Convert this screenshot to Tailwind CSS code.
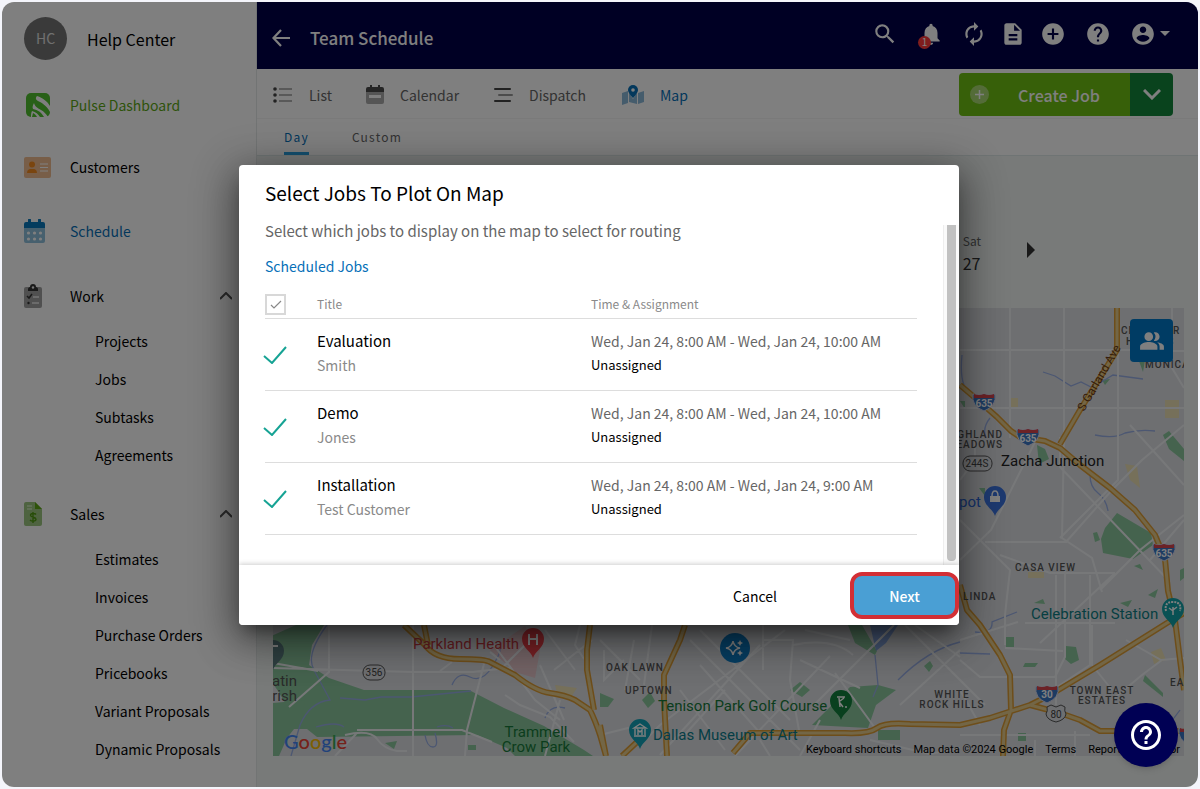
<!DOCTYPE html>
<html lang="en">
<head>
    <meta charset="UTF-8">
    <meta name="viewport" content="width=device-width, initial-scale=1.0">
    <title>Team Schedule</title>
    <script src="https://cdn.jsdelivr.net/npm/@tailwindcss/browser@4"></script>
</head>
<body class="bg-[#f4f5fb] p-0.5 font-['Noto_Sans_CJK_SC',sans-serif] text-[14px] leading-5 text-black">

    <div class="relative flex min-h-[calc(100vh-4px)] overflow-hidden rounded-xl bg-white">

        <!-- Sidebar -->
        <aside class="w-[255px] shrink-0 border-r border-[#e4e8e8] bg-white">
            <div class="flex h-[72px] items-center pl-[22px]">
                <span class="flex size-[43px] items-center justify-center rounded-full bg-[#757575] text-[#e0e0e0]">HC</span>
                <span class="ml-5 pt-0.5 text-[16px]">Help Center</span>
            </div>
            <nav>
                <a href="#" class="mt-[7px] flex h-12 items-center pl-[22px] text-[#5da714]">
                    <span class="w-[46px]">
                        <svg class="size-7" viewBox="0 0 28 28">
                            <rect x="2" y="2" width="24" height="24" rx="5" fill="#50c02e"/>
                            <path d="M13 5c6 2 10 5 13 10v6c-4-7-8-9-12-11-2-1-3-3-1-5zM10 12c1 4 4 5 7 7 3 1.500 5 4 7 7h-4c-3-5-6-7-11-8-1-2 0-4 1-6zM8 20c4 1 6 3 8 6H7c0-2 0-4 1-6z" fill="#fff"/>
                            <path d="M9 22l-1 4h5c-1-2-2-3-4-4z" fill="#50c02e"/>
                        </svg>
                    </span>
                    Pulse Dashboard
                </a>
                <a href="#" class="mt-[14px] flex h-12 items-center pl-[22px]">
                    <span class="w-[46px]">
                        <svg class="h-[21px] w-[27px]" viewBox="0 0 27 21">
                            <rect width="27" height="21" rx="2" fill="#f0bd90"/>
                            <circle cx="8" cy="7.500" r="3" fill="#f58a1e"/>
                            <path d="M3 16c0-3 2-4 3-4h4c1 0 3 1 3 4z" fill="#f58a1e"/>
                            <path d="M16 7h8M16 10.500h8M16 14h8" stroke="#fff" stroke-width="1.200"/>
                        </svg>
                    </span>
                    Customers
                </a>
                <a href="#" class="mt-4 flex h-12 items-center pl-[22px] text-[#0670b8]">
                    <span class="w-[46px]">
                        <svg class="h-6 w-[21px]" viewBox="0 0 21 24">
                            <path d="M0 8h21v14a2 2 0 0 1-2 2H2a2 2 0 0 1-2-2z" fill="#8fc0dc"/>
                            <path d="M2 3h2V1a1.200 1.200 0 0 1 3 0v2h7V1a1.200 1.200 0 0 1 3 0v2h2a2 2 0 0 1 2 2v4H0V5a2 2 0 0 1 2-2z" fill="#0878bc"/>
                            <g fill="#fff"><circle cx="4.500" cy="14" r="1.600"/><circle cx="10.500" cy="14" r="1.600"/><circle cx="16.500" cy="14" r="1.600"/><circle cx="4.500" cy="20" r="1.600"/><circle cx="10.500" cy="20" r="1.600"/><circle cx="16.500" cy="20" r="1.600"/></g>
                        </svg>
                    </span>
                    Schedule
                </a>
                <a href="#" class="mt-[17px] flex h-12 items-center pr-6 pl-[22px]">
                    <span class="w-[46px]">
                        <svg class="h-6 w-[18px]" viewBox="0 0 18 24">
                            <rect y="3" width="18" height="21" rx="2" fill="#a0a0a0"/>
                            <path d="M4 7V5c0-1 1-2 2-2a3 3 0 0 1 6 0c1 0 2 1 2 2v2z" fill="#333"/>
                            <circle cx="9" cy="3.500" r="1.200" fill="#eee"/>
                            <path d="M3 12l2 2 3-4" stroke="#333" stroke-width="1.500" fill="none"/>
                            <circle cx="4.500" cy="19" r="1.200" fill="#333"/>
                            <path d="M9 13h6M8 19h7" stroke="#e8e8e8" stroke-width="1.500"/>
                        </svg>
                    </span>
                    Work
                    <svg class="ml-auto h-2 w-3" viewBox="0 0 12 8" fill="none" stroke="#555" stroke-width="2"><path d="M0 7l6-6 6 6"/></svg>
                </a>
                <div class="flex flex-col pt-0.5 pl-[93px]">
                    <a href="#" class="flex h-[38px] items-center">Projects</a>
                    <a href="#" class="flex h-[38px] items-center">Jobs</a>
                    <a href="#" class="flex h-[38px] items-center">Subtasks</a>
                    <a href="#" class="flex h-[38px] items-center">Agreements</a>
                </div>
                <a href="#" class="mt-4 flex h-12 items-center pr-6 pl-[22px]">
                    <span class="w-[46px]">
                        <svg class="h-6 w-[18px]" viewBox="0 0 18 24">
                            <path d="M2 0h9l7 7v15a2 2 0 0 1-2 2H2a2 2 0 0 1-2-2V2a2 2 0 0 1 2-2z" fill="#9cc680"/>
                            <path d="M11 0l7 7h-7z" fill="#5da714"/>
                            <path d="M3 4h5M3 7h5" stroke="#e5f5d8" stroke-width="1.200"/>
                            <path d="M12 12.500c-1-1.500-5.500-1.500-5.500.8 0 2.500 5.500 1.500 5.500 4 0 2.300-4.500 2.300-6 .7M9 10v11" stroke="#4f9a10" stroke-width="1.400" fill="none"/>
                        </svg>
                    </span>
                    Sales
                    <svg class="ml-auto h-2 w-3" viewBox="0 0 12 8" fill="none" stroke="#555" stroke-width="2"><path d="M0 7l6-6 6 6"/></svg>
                </a>
                <div class="flex flex-col pt-0.5 pl-[93px]">
                    <a href="#" class="flex h-[38px] items-center">Estimates</a>
                    <a href="#" class="flex h-[38px] items-center">Invoices</a>
                    <a href="#" class="flex h-[38px] items-center">Purchase Orders</a>
                    <a href="#" class="flex h-[38px] items-center">Pricebooks</a>
                    <a href="#" class="flex h-[38px] items-center">Variant Proposals</a>
                    <a href="#" class="flex h-[38px] items-center">Dynamic Proposals</a>
                </div>
            </nav>
        </aside>

        <div class="flex min-w-0 flex-1 flex-col">
            <!-- Top bar -->
            <header class="flex h-[67px] items-center bg-[#000048] pr-7 pl-[15px] text-white">
                <button type="button" aria-label="Back" class="mt-1">
                    <svg class="size-[18px]" viewBox="0 0 18 18" fill="none" stroke="currentColor" stroke-width="2.200"><path d="M9 1L1.500 9 9 17M1.500 9H18"/></svg>
                </button>
                <h1 class="mt-1 ml-5 text-[17px] leading-6 font-medium">Team Schedule</h1>
                <div class="ml-auto flex items-center pb-1">
                    <button type="button" aria-label="Search" class="mr-5">
                        <svg class="size-[26px]" viewBox="0 0 24 24" fill="currentColor"><path d="M15.500 14h-.79l-.28-.27A6.471 6.471 0 0 0 16 9.500 6.500 6.500 0 1 0 9.500 16c1.610 0 3.090-.59 4.230-1.570l.27.28v.79l5 4.990L20.490 19l-4.990-5zm-6 0C7.010 14 5 11.990 5 9.500S7.010 5 9.500 5 14 7.010 14 9.500 11.990 14 9.500 14z"/></svg>
                    </button>
                    <button type="button" aria-label="Notifications" class="relative mr-[17px]">
                        <svg class="size-[26px]" viewBox="0 0 24 24" fill="currentColor"><path d="M12 22c1.100 0 2-.9 2-2h-4c0 1.100.89 2 2 2zm6-6v-5c0-3.070-1.640-5.640-4.500-6.320V4c0-.83-.67-1.500-1.500-1.500s-1.500.67-1.500 1.500v.68C7.630 5.360 6 7.920 6 11v5l-2 2v1h16v-1l-2-2z"/></svg>
                        <span class="absolute -bottom-0.5 left-0 flex size-[13px] items-center justify-center rounded-full bg-[#ff3b3b] text-[10px] leading-none">1</span>
                    </button>
                    <button type="button" aria-label="Sync" class="mr-[13px]">
                        <svg class="size-[26px]" viewBox="0 0 24 24" fill="currentColor"><path d="M12 6v3l4-4-4-4v3c-4.420 0-8 3.580-8 8 0 1.570.46 3.030 1.240 4.260L6.700 14.800A5.870 5.870 0 0 1 6 12c0-3.310 2.690-6 6-6zm6.760 1.740L17.300 9.200c.44.84.7 1.790.7 2.800 0 3.310-2.690 6-6 6v-3l-4 4 4 4v-3c4.420 0 8-3.580 8-8 0-1.570-.46-3.030-1.240-4.260z"/></svg>
                    </button>
                    <button type="button" aria-label="Documents" class="mr-[14px]">
                        <svg class="size-[26px]" viewBox="0 0 24 24" fill="currentColor"><path d="M14 2H6c-1.100 0-1.990.9-1.990 2L4 20c0 1.100.89 2 1.990 2H18c1.100 0 2-.9 2-2V8l-6-6zm2 16H8v-2h8v2zm0-4H8v-2h8v2zm-3-5V3.500L18.500 9H13z"/></svg>
                    </button>
                    <button type="button" aria-label="Add" class="mr-[19px]">
                        <svg class="size-[26px]" viewBox="0 0 24 24" fill="currentColor"><path d="M12 2C6.480 2 2 6.480 2 12s4.480 10 10 10 10-4.480 10-10S17.520 2 12 2zm5 11h-4v4h-2v-4H7v-2h4V7h2v4h4v2z"/></svg>
                    </button>
                    <button type="button" aria-label="Help" class="mr-[19px]">
                        <svg class="size-[26px]" viewBox="0 0 24 24" fill="currentColor"><path d="M12 2C6.480 2 2 6.480 2 12s4.480 10 10 10 10-4.480 10-10S17.520 2 12 2zm1 17h-2v-2h2v2zm2.070-7.750l-.9.92C13.450 12.900 13 13.500 13 15h-2v-.5c0-1.100.45-2.100 1.170-2.830l1.240-1.260c.37-.36.59-.86.59-1.410 0-1.100-.9-2-2-2s-2 .9-2 2H8c0-2.210 1.790-4 4-4s4 1.790 4 4c0 .88-.36 1.680-.93 2.250z"/></svg>
                    </button>
                    <button type="button" aria-label="Account" class="flex items-center gap-1">
                        <svg class="size-[26px]" viewBox="0 0 24 24" fill="currentColor"><path d="M12 2C6.480 2 2 6.480 2 12s4.480 10 10 10 10-4.480 10-10S17.520 2 12 2zm0 3c1.660 0 3 1.340 3 3s-1.340 3-3 3-3-1.340-3-3 1.340-3 3-3zm0 14.200a7.200 7.200 0 0 1-6-3.220c.03-1.990 4-3.080 6-3.080 1.990 0 5.970 1.090 6 3.080a7.200 7.200 0 0 1-6 3.220z"/></svg>
                        <svg class="h-[5px] w-2.5" viewBox="0 0 10 5" fill="currentColor"><path d="M0 0h10L5 5z"/></svg>
                    </button>
                </div>
            </header>

            <!-- View switcher -->
            <div class="flex h-[50px] items-center border-b border-[#f4f4f4] pt-0.5 pr-[25px] pl-4 text-[#666]">
                <a href="#" class="flex items-center">
                    <svg class="mr-4 h-4 w-5" viewBox="0 0 20 16"><g fill="#444"><circle cx="2" cy="2" r="1.800"/><circle cx="2" cy="8" r="1.800"/><circle cx="2" cy="14" r="1.800"/></g><path d="M6 2h13M6 8h13M6 14h13" stroke="#999" stroke-width="1.600"/></svg>
                    List
                </a>
                <a href="#" class="ml-[34px] flex items-center">
                    <svg class="mr-4 h-[19px] w-[18px]" viewBox="0 0 18 19"><path d="M0 7h18v10a2 2 0 0 1-2 2H2a2 2 0 0 1-2-2z" fill="#aaa"/><path d="M2 2h2V0h2v2h6V0h2v2h2a2 2 0 0 1 2 2v3H0V4a2 2 0 0 1 2-2z" fill="#4a4a4a"/><path d="M3 10h12v3H3z" fill="#fff"/></svg>
                    Calendar
                </a>
                <a href="#" class="ml-[34px] flex items-center">
                    <svg class="mr-4 h-4 w-5" viewBox="0 0 20 16" fill="none" stroke-width="2" stroke-linecap="round"><path d="M2 2h15M2 14h15" stroke="#444"/><path d="M6 8h13" stroke="#999"/></svg>
                    Dispatch
                </a>
                <a href="#" class="ml-9 flex items-center text-[#0670b8]">
                    <svg class="mr-4 h-5 w-[22px]" viewBox="0 0 22 20"><path d="M0 8l6-2v12l-6 2zM7 6l2 5 2 3 2-3 2-4v12l-8-2zM16 8l6-2v11l-6 2z" fill="#8bb8d8"/><path d="M11 0a5 5 0 0 1 5 5c0 3-5 8-5 8S6 8 6 5a5 5 0 0 1 5-5z" fill="#0670b8"/><circle cx="11" cy="5" r="1.800" fill="#fff"/></svg>
                    Map
                </a>
                <div class="ml-auto flex h-[43px] overflow-hidden rounded text-white">
                    <button type="button" class="flex w-[171px] items-center bg-[#6fc013] pl-[11px] text-[16px] font-medium">
                        <svg class="mr-[29px] size-[19px]" viewBox="0 0 19 19"><circle cx="9.500" cy="9.500" r="9.500" fill="#fff" fill-opacity=".4"/><path d="M9.500 5v9M5 9.500h9" stroke="#fff" stroke-width="1.500"/></svg>
                        Create Job
                    </button>
                    <button type="button" aria-label="More create options" class="flex w-[43px] items-center justify-center bg-[#12863a]">
                        <svg class="h-[11px] w-[18px]" viewBox="0 0 18 11" fill="none" stroke="currentColor" stroke-width="3"><path d="M1 1l8 8 8-8"/></svg>
                    </button>
                </div>
            </div>

            <!-- Range tabs -->
            <div class="flex h-[37px] gap-[43px] border-b border-[#dfe8e8] pl-[27px] text-[12px] tracking-widest text-[#666]">
                <a href="#" class="flex items-center border-b-[3px] border-[#2aa0e0] pt-0.5 text-[#0670b8]">Day</a>
                <a href="#" class="flex items-center border-b-[3px] border-transparent pt-0.5">Custom</a>
            </div>

            <!-- Map area -->
            <main class="flex flex-1 flex-col bg-[#f0f5f3] pr-3.5 pb-[31px] pl-4">
                <div class="flex h-[152px] items-center justify-end pb-[9px] leading-[23px]">
                    <a href="#" class="pt-12 text-[#333]"><span class="block text-[12px] text-[#666]">Sat</span><span class="block text-[16px]">27</span></a>
                    <button type="button" aria-label="Next week" class="mt-11 mr-[149px] ml-[46px]">
                        <svg class="h-4 w-2" viewBox="0 0 8 16" fill="#333"><path d="M0 0l8 8-8 8z"/></svg>
                    </button>
                </div>
                <div class="relative min-h-[448px] flex-1 overflow-hidden font-[Roboto,sans-serif]">
                    <svg class="absolute inset-0 size-full" viewBox="273 308 911 448" preserveAspectRatio="xMidYMid slice">
                        <rect x="273" y="308" width="911" height="448" fill="#dcdee3"/>
                        <!-- parks -->
                        <g fill="#8ac79c">
                            <path d="M296 625h28l-12 20-3 20 20 13 35 12h105l35 18 40 18 40 24 15 10h-80l-12-12-30-13-160 2-10-8h-35v-16l18-2-12-20-14-20-22-8v-18l16-3z"/>
                            <path d="M273 703l32-3-4 20-14 18-8 18h-6zM385 743l12-2-3 8zM468 745h8v5h-8zM600 693l14 6-6 8h-8zM642 700l8-8 5 9-7 7zM790 690l10-8 10 8-8 7zM848 625h14l15 26-2 4-20-12zM812 725l38-38 28-2 18 5-20 15-8 23zM878 730h22v10h-22zM924 666l6-5 3 5-4 6z"/>
                            <path d="M1105 528l12-15 34 20 2 12-20 14-30-6-2-14zM1135 350l10 10-2 12zM1102 380l8-1-5 6zM1037 445l8 4 4 10-10 5zM1163 435l6-4 15 18v12l-15-12zM1093 533l4-1 3 8-5 2zM1134 566l6-2 3 6zM1148 595l10-6-3 9zM1120 603l12-3-4 7zM1034 603l9-4 2 5zM1066 646l10 1 3 13-8 4-6-5zM1006 637h8v10h-8zM1025 663h13l-3 4h-12zM1145 675l18 18v4l-20-16zM1018 733h8v8h-8zM979 488h6v8zM960 401h5v8zM1180 570l4-2v10l-4 3z"/>
                        </g>
                        <g fill="#ece0b4"><path d="M1010 398h8v10h-8zM1165 400h14v18h-14zM1125 464l12 2 3 22-10-8zM1151 652l10-4 5 12-12 4zM1028 572h16v6h-16zM555 685l22 3-6 9-14-4z"/></g>
                        <path d="M490 650l35-24 15 24-5 28-20-6z" fill="#e6c6ca"/>
                        <path d="M870 625h28l-12 18-10 8z" fill="#86a6e0"/>
                        <!-- creeks -->
                        <g fill="none" stroke="#98aee4" stroke-width="1.300">
                            <path d="M327 625q-22 30-13 45l16 30q-20 2-30 25l-9 31M340 698l25 2 16-3h30l60-6M316 727q20-6 28 0M425 735q2 12 8 12t2-14M437 727q10-3 16 1M452 685q6-14 18-8t22-10 8-20M545 718q5-14 20-10M875 655l3 30-5 12M898 680q30-30 62-38"/>
                            <path d="M1043 372l12 4 16 10 10-4 10 5 12-6 10-6 30 4M962 355q-2 20 2 30M990 418q-8 10-4 20M1095 435q20 4 30-2 15-4 30-2M1090 475q0 12 8 18t10 18M960 653l30 1M975 632q18 2 17-10l25-10M1150 740q20-15 30-30"/>
                        </g>
                        <!-- streets -->
                        <g fill="none" stroke="#eff1f3" stroke-width="2">
                            <path d="M1010 308v130M1064 308v130l-2 100 30 20 10 34M1172 308v60l12 20M960 350h170M1170 351h14M960 408h224M1118 350v130l-58 58M1184 425l-42 35-30 30-46 52M1036 440l-45 90-31 30M960 520l50 50-5 45v30M985 542h82M1118 308M1000 555l50 18h65M1056 575v130M1090 575v90l-60 40M1025 623h90M960 640l58-18M1115 573l-75 70M1005 648l58 3M960 660l20 17h75l10-20V570M1092 625v40l20 25M1130 425l54 60M1100 590l40-40 44-35M1126 640l35 20 23-2M1112 700l30-25 20-15M960 735h130M1150 560l34-40M1060 437v30l110 115M975 430v30l-15 20"/>
                            <path d="M329 625v47l-40 35M273 668l140 4h60q15-2 38-4M413 625v131M485 660l-18 70-2 26M273 663l45 8M357 730h105l30 12M357 733l-22 23M345 735q25-6 32 4t20 12h10M440 671l12-9M490 640l45 60 25 20M500 660l-10-8M505 695l15 10 30 12 24 25M530 640l-30 30M540 665l24 55M560 700l-15 56M580 625l-5 20 9 14M600 640l40 40M604 650v30l20-20M634 640l-9 50M652 625l-8 60M690 640l110 110M700 630l90 90M640 745l20-20 125-95M660 755l100-110M680 740l45-50M763 625v45M763 640h30l-3 40 10 56M793 645q40-8 60 10M814 705l80-80M835 673l40 55M800 660l60 28M770 756l-10-16M700 665l60 68M905 625l80 80M960 650l-60 55M915 625l45 32M735 756l95-100M820 720l-20 36M850 640l-45-10M592 640l-38 30M575 670l-30-40M600 735l40-10"/>
                            <path d="M1075 756v-25M1035 740v16M960 690l20 35M870 740l60 14 30-6M680 690l45 60"/>
                        </g>
                        <!-- highways: casing and fill -->
                        <g fill="none" stroke-linejoin="round">
                            <g stroke="#dc9c34" stroke-width="6">
                                <path d="M960 385l20 17 17 15 14 14 9 6 25 4 15 7 20 17 30 23 25 22 20 25 10 24 3 32 7 29 5 40 4 30M1117 308v42l-37 60-20 34M960 585l7 25 13 15 10 15 10 15 10 20 1 35-7 20-1 26M1184 613l-17 10-67 42-50 30-20 10-40 13-30 7-50-1q-25-2-33 4t-32 5h-95q-10 12-17 20M1030 705l30 8 20 7 20 11h84"/>
                                <path d="M404 625l21 20q10 14 35 14t30 3l25 13q20 16 35 18t25 7l15 10q5 10 10 25l6 21M424 625l4 20M590 625l-3 25v20l7 40M685 625l-5 15-16 35v25l3 56M637 742l-15 14M600 725l6 31"/>
                            </g>
                            <g stroke="#e6cc8c" stroke-width="3">
                                <path d="M960 385l20 17 17 15 14 14 9 6 25 4 15 7 20 17 30 23 25 22 20 25 10 24 3 32 7 29 5 40 4 30M1117 308v42l-37 60-20 34M960 585l7 25 13 15 10 15 10 15 10 20 1 35-7 20-1 26M1184 613l-17 10-67 42-50 30-20 10-40 13-30 7-50-1q-25-2-33 4t-32 5h-95q-10 12-17 20M1030 705l30 8 20 7 20 11h84"/>
                                <path d="M404 625l21 20q10 14 35 14t30 3l25 13q20 16 35 18t25 7l15 10q5 10 10 25l6 21M424 625l4 20M590 625l-3 25v20l7 40M685 625l-5 15-16 35v25l3 56M637 742l-15 14M600 725l6 31"/>
                            </g>
                        </g>
                        <!-- interstate shields -->
                        <defs>
                            <g id="shield">
                                <path d="M-11-8q5 2 11 0 6 2 11 0 2 12-11 17-13-5-11-17z" fill="#3a76c4" stroke="#dde" stroke-width="1"/>
                                <path d="M-10-8q5 2 10 0 5 2 10 0v4h-20z" fill="#d8444c"/>
                            </g>
                            <path id="pin" d="M0 19c-2-7-11-10-11-19a11 11 0 0 1 22 0c0 9-9 12-11 19z"/>
                        </defs>
                        <use href="#shield" x="984" y="402"/>
                        <use href="#shield" x="1028" y="437"/>
                        <use href="#shield" x="1164" y="552"/>
                        <use href="#shield" x="1047" y="694"/>
                        <use href="#shield" x="1190" y="736"/>
                        <g fill="#fff" font-size="10" font-weight="700" text-anchor="middle">
                            <text x="984" y="407">635</text>
                            <text x="1028" y="442">635</text>
                            <text x="1164" y="557">635</text>
                            <text x="1047" y="698">30</text>
                        </g>
                        <g fill="#dcdee3" stroke="#555" stroke-width="1">
                            <rect x="963" y="456" width="29" height="15" rx="7"/>
                            <rect x="363" y="665" width="22" height="15" rx="7"/>
                            <path d="M1047 707l4-2 5 2 5-2 4 2q-1 4 1 7-1 6-10 8-9-2-10-8 2-3 1-7z"/>
                        </g>
                        <g fill="#444" font-size="10" text-anchor="middle">
                            <text x="977" y="467">244S</text>
                            <text x="374" y="676">356</text>
                            <text x="1056" y="718">80</text>
                        </g>
                        <!-- place pins -->
                        <use href="#pin" x="995" y="497" fill="#3c74e0"/>
                        <path d="M990 496h10v6h-10z" fill="#fff"/>
                        <path d="M992 496q0-5 3-5t3 5" fill="none" stroke="#fff" stroke-width="1.500"/>
                        <use href="#pin" x="1173" y="609" fill="#12a3a8"/>
                        <path d="M1173 615v-8m0 4l-4-3m4 2l4-3" fill="none" stroke="#fff" stroke-width="1.500"/>
                        <path d="M1166 611q-2-9 7-9t7 9" fill="none" stroke="#fff" stroke-width="2" stroke-dasharray="2 1"/>
                        <use href="#pin" x="533" y="639" fill="#f0424a"/>
                        <path d="M529 634v11m8-11v11m-8-6h8" stroke="#fff" stroke-width="2"/>
                        <use href="#pin" x="841" y="701" fill="#12803c"/>
                        <path d="M837 697h8m-6 1l1 9m0-6l4-3m-4 5l3 4" stroke="#fff" stroke-width="1.500" fill="none"/>
                        <circle cx="846" cy="707" r="1" fill="#fff"/>
                        <use href="#pin" x="640" y="730" fill="#12a3b8"/>
                        <path d="M634 728l6-4 6 4zM635 729v6m10-6v6m-11 1h12M638 735v-5l2 2 2-2v5" fill="none" stroke="#fff" stroke-width="1.400"/>
                        <use href="#pin" x="273" y="651" fill="#5d7f82"/>
                        <path d="M273 646h5" stroke="#fff" stroke-width="2"/>
                        <circle cx="735" cy="648" r="15" fill="#0c7cc4"/>
                        <path d="M733 641q1 6 7 7-6 1-7 7-1-6-7-7 6-1 7-7z" fill="none" stroke="#fff" stroke-width="1.500"/>
                        <path d="M740 640l1 2 2 1-2 1-1 2-1-2-2-1 2-1zM740 650l1 2 2 1-2 1-1 2-1-2-2-1 2-1z" fill="#fff"/>
                        <!-- place names -->
                        <g font-size="15">
                            <text x="1001" y="466" fill="#222">Zacha Junction</text>
                            <text x="981" y="507" text-anchor="end" fill="#2c68d8">Home Depot</text>
                            <text x="1031" y="619" fill="#0d7f84">Celebration Station</text>
                            <text x="413" y="649" fill="#c93a42">Parkland Health</text>
                            <text x="658" y="711" fill="#177a3a">Tenison Park Golf Course</text>
                            <text x="653" y="740" fill="#0b7d8c">Dallas Museum of Art</text>
                            <text x="536" y="737" text-anchor="middle" fill="#177a3a">Trammell</text>
                            <text x="536" y="752" text-anchor="middle" fill="#177a3a">Crow Park</text>
                            <text x="297" y="686" text-anchor="end" fill="#555">atin</text>
                            <text x="297" y="701" text-anchor="end" fill="#555">rish</text>
                            <text x="1084" y="412" font-size="12" fill="#6b3d18" transform="rotate(-60 1084 412)">S Garland Ave</text>
                        </g>
                        <g class="tracking-widest" font-size="10" font-weight="500" fill="#555">
                            <text x="606" y="671">OAK LAWN</text>
                            <text x="625" y="694">UPTOWN</text>
                            <text x="952" y="698" text-anchor="middle">WHITE</text>
                            <text x="952" y="708" text-anchor="middle">ROCK HILLS</text>
                            <text x="1102" y="694" text-anchor="middle">TOWN EAST</text>
                            <text x="1102" y="704" text-anchor="middle">ESTATES</text>
                            <text x="1015" y="571">CASA VIEW</text>
                            <text x="963" y="600">LINDA</text>
                            <text x="1003" y="438" text-anchor="end">HIGHLAND</text>
                            <text x="1003" y="448" text-anchor="end">MEADOWS</text>
                            <text x="1170" y="686">EA</text>
                            <text x="1121" y="334">CHANDLER</text>
                            <text x="1126" y="345">HEIGHTS</text>
                            <text x="1145" y="368">MONICA</text>
                        </g>
                        <text x="284" y="749" font-family="Lato" font-size="20" font-weight="500"><tspan fill="#4285f4">G</tspan><tspan fill="#ea4335">o</tspan><tspan fill="#fbbc05">o</tspan><tspan fill="#4285f4">g</tspan><tspan fill="#34a853">l</tspan><tspan fill="#ea4335">e</tspan></text>
                    </svg>
                    <button type="button" aria-label="Team members" class="absolute top-[11px] right-[11px] flex size-[43px] items-center justify-center rounded bg-[#0078c8] text-white">
                        <svg class="size-[26px]" viewBox="0 0 24 24" fill="currentColor"><path d="M16.670 13.130C18.040 14.060 19 15.320 19 17v3h4v-3c0-2.180-3.570-3.470-6.330-3.870zM15 12c2.210 0 4-1.790 4-4s-1.790-4-4-4c-.47 0-.91.1-1.330.24a5.980 5.980 0 0 1 0 7.520c.42.14.86.24 1.330.24zM9 12c2.210 0 4-1.790 4-4s-1.790-4-4-4-4 1.790-4 4 1.790 4 4 4zm0 1c-2.670 0-8 1.340-8 4v3h16v-3c0-2.660-5.330-4-8-4z"/></svg>
                    </button>
                    <div class="absolute right-0 bottom-0 flex gap-3 pr-1 text-[11px] leading-3">
                        <button type="button">Keyboard shortcuts</button>
                        <span>Map data ©2024 Google</span>
                        <a href="#">Terms</a>
                        <a href="#">Report a map error</a>
                    </div>
                </div>
            </main>
        </div>

        <!-- Dialog -->
        <div class="absolute inset-0 flex items-center justify-center bg-black/50 pr-0.5">
            <div role="dialog" aria-labelledby="dialogTitle" class="flex w-full max-w-[720px] flex-col overflow-hidden rounded-sm bg-white shadow-[0_11px_15px_-7px_rgba(0,0,0,0.4),0_12px_38px_3px_rgba(0,0,0,0.35),0_9px_46px_8px_rgba(0,0,0,0.2)]">
                <h2 id="dialogTitle" class="px-[26px] pt-4 pb-5 text-[19px] leading-6">Select Jobs To Plot On Map</h2>
                <div class="flex h-[340px] justify-between pl-[26px]">
                    <div class="w-[652px]">
                        <p class="text-[15px] leading-3 text-[#666]">Select which jobs to display on the map to select for routing</p>
                        <h3 class="mt-[17px] leading-6 text-[#0670b8]">Scheduled Jobs</h3>
                        <table class="mt-4 w-full text-left">
                            <thead>
                                <tr class="h-[25px] border-b border-[#ddd] align-top text-[12px] text-[#8a8a8a]">
                                    <th class="w-[52px] p-0">
                                        <label class="flex size-[21px] items-center justify-center border-2 border-[#d8d8d8]">
                                            <input type="checkbox" checked aria-label="Select all jobs" class="peer sr-only">
                                            <svg class="hidden h-[9px] w-3 peer-checked:block" viewBox="0 0 12 9" fill="none" stroke="#888" stroke-width="1.200"><path d="M1 5l3 3 7-7"/></svg>
                                        </label>
                                    </th>
                                    <th class="w-[274px] p-0 font-normal">Title</th>
                                    <th class="p-0 font-normal">Time &amp; Assignment</th>
                                </tr>
                            </thead>
                            <tbody>
                                <tr class="h-[72px] border-b border-[#ddd]">
                                    <td>
                                        <label class="block">
                                            <input type="checkbox" checked aria-label="Evaluation" class="peer sr-only">
                                            <svg class="-ml-0.5 hidden h-[18px] w-6 peer-checked:block" viewBox="0 0 24 18" fill="none" stroke="#16a394" stroke-width="2"><path d="M1 10l8 7L23 1"/></svg>
                                        </label>
                                    </td>
                                    <td class="pb-1 leading-6"><span class="block text-[15px]">Evaluation</span><span class="block text-[#8a8a8a]">Smith</span></td>
                                    <td class="pb-1 text-[13px] leading-[23px]"><span class="block text-[14px] text-[#666]">Wed, Jan 24, 8:00 AM - Wed, Jan 24, 10:00 AM</span>Unassigned</td>
                                </tr>
                                <tr class="h-[72px] border-b border-[#ddd]">
                                    <td>
                                        <label class="block">
                                            <input type="checkbox" checked aria-label="Demo" class="peer sr-only">
                                            <svg class="-ml-0.5 hidden h-[18px] w-6 peer-checked:block" viewBox="0 0 24 18" fill="none" stroke="#16a394" stroke-width="2"><path d="M1 10l8 7L23 1"/></svg>
                                        </label>
                                    </td>
                                    <td class="pb-1 leading-6"><span class="block text-[15px]">Demo</span><span class="block text-[#8a8a8a]">Jones</span></td>
                                    <td class="pb-1 text-[13px] leading-[23px]"><span class="block text-[14px] text-[#666]">Wed, Jan 24, 8:00 AM - Wed, Jan 24, 10:00 AM</span>Unassigned</td>
                                </tr>
                                <tr class="h-[72px] border-b border-[#ddd]">
                                    <td>
                                        <label class="block">
                                            <input type="checkbox" checked aria-label="Installation" class="peer sr-only">
                                            <svg class="-ml-0.5 hidden h-[18px] w-6 peer-checked:block" viewBox="0 0 24 18" fill="none" stroke="#16a394" stroke-width="2"><path d="M1 10l8 7L23 1"/></svg>
                                        </label>
                                    </td>
                                    <td class="pb-1 leading-6"><span class="block text-[15px]">Installation</span><span class="block text-[#8a8a8a]">Test Customer</span></td>
                                    <td class="pb-1 text-[13px] leading-[23px]"><span class="block text-[14px] text-[#666]">Wed, Jan 24, 8:00 AM - Wed, Jan 24, 9:00 AM</span>Unassigned</td>
                                </tr>
                            </tbody>
                        </table>
                    </div>
                    <!-- scroll track -->
                    <div class="w-4 border-l border-[#eee] bg-[#fafafa] px-[3px] pb-1">
                        <div class="h-full rounded-b bg-[#c1c1c1]"></div>
                    </div>
                </div>
                <div class="flex h-[60px] items-center justify-end gap-[73px] bg-white pt-0.5 shadow-[0_-1px_5px_rgba(0,0,0,0.2)]">
                    <button type="button">Cancel</button>
                    <button type="button" class="h-[47px] w-[109px] rounded-xl border-4 border-[#d32f35] bg-[#4a9fd4] font-medium text-white">Next</button>
                </div>
            </div>
        </div>

        <!-- Help launcher -->
        <button type="button" aria-label="Open help" class="absolute right-5 bottom-5 flex size-16 items-center justify-center rounded-full bg-[#000054] text-white shadow-md">
            <svg class="size-9" viewBox="0 0 24 24" fill="currentColor"><path d="M11 18h2v-2h-2v2zm1-16C6.480 2 2 6.480 2 12s4.480 10 10 10 10-4.480 10-10S17.520 2 12 2zm0 18c-4.410 0-8-3.590-8-8s3.590-8 8-8 8 3.590 8 8-3.590 8-8 8zm0-14c-2.210 0-4 1.790-4 4h2c0-1.100.9-2 2-2s2 .9 2 2c0 2-3 1.750-3 5h2c0-2.250 3-2.500 3-5 0-2.210-1.790-4-4-4z"/></svg>
        </button>
    </div>

</body>
</html>
